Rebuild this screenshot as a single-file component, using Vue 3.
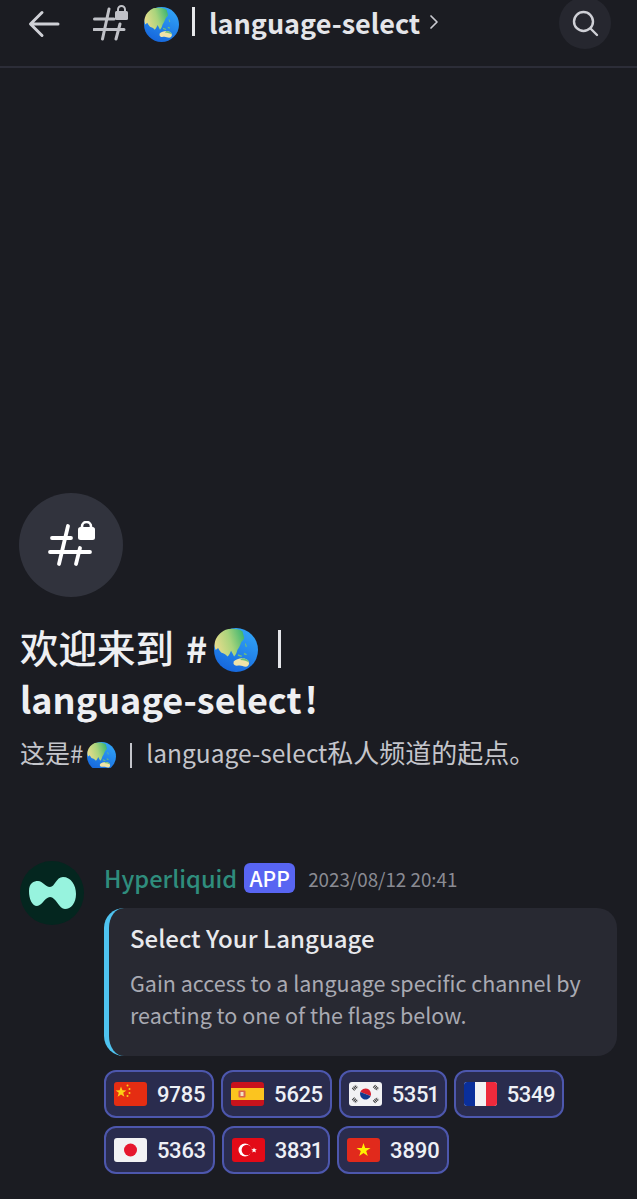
<script setup>
const reactions = [
  { flag: "cn", count: 9785 },
  { flag: "es", count: 5625 },
  { flag: "kr", count: 5351 },
  { flag: "fr", count: 5349 },
  { flag: "jp", count: 5363 },
  { flag: "tr", count: 3831 },
  { flag: "vn", count: 3890 },
];
</script>

<template>
  <div class="page">
    <svg width="0" height="0" class="defs" aria-hidden="true">
      <defs>
        <linearGradient id="sea" x1="0.7" y1="0.1" x2="0.3" y2="1">
          <stop offset="0" stop-color="#2f9ff5" />
          <stop offset="1" stop-color="#1565dc" />
        </linearGradient>
        <linearGradient id="land" x1="0" y1="0.5" x2="1" y2="0.2">
          <stop offset="0" stop-color="#e6dc8c" />
          <stop offset="0.5" stop-color="#a9d47c" />
          <stop offset="1" stop-color="#3cb570" />
        </linearGradient>
        <symbol id="globe" viewBox="0 0 32 32">
          <circle cx="16" cy="16" r="16" fill="url(#sea)" />
          <path
            d="M8.500 1.200C12 .2 17 .3 20.700 2.400L22 7.300C21.500 9 20 9.500 19.500 11 18.800 13 18 14.500 17 16 16.500 18 15.800 19.500 14.600 20.700 13.800 19 13 17.500 12.400 16.500 11.800 18 11 19.800 9.800 20.700 8.500 19 7 18.500 5.500 18 4.500 17 3.500 15.500 3 14.500L1.200 16C.4 14 .2 12 .7 10 1.800 6 4.500 3 8.500 1.200Z"
            fill="url(#land)"
          />
          <path d="M14 24.500c1.800-1.500 4-2.500 6.500-2.500 2.400 0 4.700 1.200 5 3.200.2 1.600-1 2.900-2.500 2.900-1.700 0-2.800-.8-4.300-.8-1.400 0-2.800.5-3.800-.4-.8-.7-1-1.600-.4-2.400Z" fill="#efe3a8" />
          <path d="M20.500 22c2.400 0 4.700 1.200 5 3.200-1.700-1.200-3.500-1.700-6.500-1.900Z" fill="#6fc07a" />
          <path d="M17.500 19l3 1.200-.6.900-2.600-1ZM22 18l2 1-.7.800-1.700-.8ZM23 11l1 2.500-.9.400-.6-2.400Z" fill="#6fc07a" />
        </symbol>
      </defs>
    </svg>

    <header class="topbar">
      <svg class="back" width="34" height="30" viewBox="0 0 34 30" fill="none" stroke="#cfd0d6" stroke-width="3" stroke-linecap="round" stroke-linejoin="round">
        <path d="M31 15H4M15 3.500 3.500 15 15 26.500" />
      </svg>
      <svg class="hash" width="36" height="38" viewBox="0 0 36 38" fill="none">
        <path d="M16 5 9.500 35M27 20l-4 15M1.500 15H21M1 25.500h30" stroke="#c0c1c7" stroke-width="3" stroke-linecap="round" />
        <rect x="22" y="7" width="13" height="9" rx="1.500" fill="#c0c1c7" />
        <path d="M25 7.500V5.500a3.500 3.500 0 0 1 7 0v2" stroke="#c0c1c7" stroke-width="2" />
      </svg>
      <svg class="globe-top" width="35" height="35"><use href="#globe" /></svg>
      <span class="bar"></span>
      <span class="channel">language-select</span>
      <svg class="chev" width="10" height="16" viewBox="0 0 10 16" fill="none" stroke="#c9cad0" stroke-width="1.700" stroke-linecap="round" stroke-linejoin="round">
        <path d="M2 2l6 6-6 6" />
      </svg>
      <div class="search">
        <svg width="28" height="28" viewBox="0 0 28 28" fill="none" stroke="#cfd0d6" stroke-width="2.400" stroke-linecap="round">
          <circle cx="12.500" cy="12.500" r="9.500" />
          <path d="M20 20l6 6" />
        </svg>
      </div>
    </header>

    <section class="welcome">
      <div class="channel-icon">
        <svg width="52" height="48" viewBox="0 0 52 48" fill="none">
          <path d="M23 5 14 43M35 27l-4 16M7 17h19M5 31h40" stroke="#fff" stroke-width="3.800" stroke-linecap="round" />
          <rect x="33" y="6" width="17" height="13" rx="2.500" fill="#fff" />
          <path d="M37 7V5.500a4.500 4.500 0 0 1 9 0V7" stroke="#fff" stroke-width="2.600" />
        </svg>
      </div>
      <h1 class="title">
        <span class="cjk">欢迎来到</span><span class="hash-title">#</span><svg class="globe-title" width="44" height="44"><use href="#globe" /></svg><span class="title-bar"></span><br />language-select<span class="bang">!</span>
      </h1>
      <p class="subtitle">
        这是<span class="hash-sub">#</span><svg class="globe-sub" width="29" height="26" viewBox="0 0 29 26"><use href="#globe" width="29" height="29" /></svg><span class="sub-bar"></span><span class="sub-latin">language-select</span><span class="sub-tail">私人频道的起点。</span>
      </p>
    </section>

    <section class="message">
      <div class="avatar">
        <svg width="47" height="32" viewBox="0 0 47 32">
          <path
            d="M0 14C0 6 5 4 9 4c5 0 7 6 12 6s6-10 13-10c8 0 13 8 13 17 0 9-5 15-11 15-6 0-9-12-15-12-5 0-8 9-13 9-5 0-8-7-8-15Z"
            fill="#97f3de"
          />
        </svg>
      </div>
      <div class="body">
        <div class="meta">
          <span class="name">Hyperliquid</span>
          <span class="badge">APP</span>
          <span class="time">2023/08/12 20:41</span>
        </div>
        <div class="embed">
          <h2 class="embed-title">Select Your Language</h2>
          <p class="embed-text">Gain access to a language specific channel by reacting to one of the flags below.</p>
        </div>
        <div class="reactions">
          <div v-for="r in reactions" :key="r.flag" class="reaction">
            <svg class="flag" width="33" height="24" viewBox="0 0 33 24">
              <template v-if="r.flag === 'cn'">
                <rect width="33" height="24" fill="#e52d12" />
                <path d="M7 4.500l1.400 3.800 4 .1-3.200 2.400 1.200 3.900L7 12.400l-3.400 2.300 1.200-3.900-3.200-2.400 4-.1Z" fill="#fcd116" />
                <circle cx="13.500" cy="3.500" r="1" fill="#fcd116" />
                <circle cx="15.500" cy="7" r="1" fill="#fcd116" />
                <circle cx="15.500" cy="11" r="1" fill="#fcd116" />
                <circle cx="13.500" cy="14" r="1" fill="#fcd116" />
              </template>
              <template v-else-if="r.flag === 'es'">
                <rect width="33" height="24" fill="#c8131c" />
                <rect y="6" width="33" height="12" fill="#fbc41f" />
                <rect x="7.500" y="8.500" width="7" height="7" rx="1" fill="#d9634e" />
                <rect x="9.500" y="10" width="3" height="4" fill="#f3e1c0" />
              </template>
              <template v-else-if="r.flag === 'kr'">
                <rect width="33" height="24" fill="#f2f2f4" />
                <path d="M11 12a5.500 5.500 0 0 1 11 0Z" fill="#d6202f" transform="rotate(20 16.500 12)" />
                <path d="M11 12a5.500 5.500 0 0 0 11 0Z" fill="#123a8e" transform="rotate(20 16.500 12)" />
                <g stroke="#333" stroke-width="3.600" stroke-dasharray="1 .7">
                  <path d="M4 7.500l4-3.500M25 4l4 3.500M4 16.500l4 3.500M25 20l4-3.500" />
                </g>
              </template>
              <template v-else-if="r.flag === 'fr'">
                <rect width="33" height="24" fill="#f2f2f4" />
                <rect width="11" height="24" fill="#0a2f9c" />
                <rect x="22" width="11" height="24" fill="#ee2a3c" />
              </template>
              <template v-else-if="r.flag === 'jp'">
                <rect width="33" height="24" fill="#f2f2f4" />
                <circle cx="16.500" cy="12" r="6.500" fill="#e6162d" />
              </template>
              <template v-else-if="r.flag === 'tr'">
                <rect width="33" height="24" fill="#e30a17" />
                <circle cx="13" cy="12" r="6.500" fill="#fff" />
                <circle cx="14.800" cy="12" r="5.200" fill="#e30a17" />
                <path d="M22 9.500l.8 1.800 2-.1-1.500 1.300.6 1.900-1.900-1-1.700 1 .5-1.900-1.500-1.300 2 .1Z" fill="#fff" />
              </template>
              <template v-else>
                <rect width="33" height="24" fill="#e12a1c" />
                <path d="M16.500 5l1.700 5h5.300l-4.300 3.100 1.600 5-4.300-3.100-4.300 3.100 1.600-5L9.500 10h5.300Z" fill="#fff000" />
              </template>
            </svg>
            <span class="count">{{ r.count }}</span>
          </div>
        </div>
      </div>
    </section>
  </div>
</template>

<style>
html,
body {
  background: #1b1c22;
}
</style>

<style scoped>
.page {
  width: 637px;
  height: 1199px;
  overflow: hidden;
  background: #1b1c22;
  color: #f0f1f4;
  font-family: "Noto Sans CJK SC", "Noto Sans", sans-serif;
}

.defs {
  position: absolute;
}

.topbar {
  height: 68px;
  box-sizing: border-box;
  border-bottom: 2px solid #2c2d38;
  display: flex;
  align-items: flex-start;
  padding-left: 27px;
}

.back {
  margin-top: 9px;
}

.hash {
  margin: 4px 0 0 32px;
}

.globe-top {
  margin: 7px 0 0 15px;
}

.bar {
  width: 3px;
  height: 29px;
  margin: 7px 0 0 13px;
  background: #e6e7ea;
}

.channel {
  margin: 2px 0 0 14px;
  font-size: 27px;
  line-height: 42px;
  font-weight: 700;
  color: #e4e5e9;
}

.chev {
  margin: 14px 0 0 9px;
}

.search {
  width: 52px;
  height: 52px;
  margin: -3px 0 0 auto;
  margin-right: 26px;
  border-radius: 50%;
  background: #26272f;
  display: flex;
  align-items: center;
  justify-content: center;
}

.welcome {
  padding: 425px 20px 0 19px;
}

.channel-icon {
  width: 104px;
  height: 104px;
  border-radius: 50%;
  background: #31333d;
  display: flex;
  align-items: center;
  justify-content: center;
}

.title {
  margin: 24px 0 0 1px;
  font-size: 36px;
  line-height: 51px;
  font-weight: 700;
  color: #eeeff2;
}

.cjk {
  font-size: 38.500px;
  font-weight: 500;
}

.hash-title {
  margin-left: 12px;
}

.bang {
  margin-left: 3px;
}

.globe-title {
  vertical-align: -9px;
  margin-left: 7px;
}

.title-bar {
  display: inline-block;
  width: 3px;
  height: 38px;
  margin-left: 20px;
  vertical-align: -5px;
  background: #e4e5e9;
}

.subtitle {
  margin: 10px 0 0 1px;
  font-size: 25px;
  line-height: 36px;
  color: #c4c5cb;
  white-space: nowrap;
}

.hash-sub {
  margin-right: 4px;
  font-size: 24px;
}

.sub-latin {
  font-size: 24.500px;
}

.sub-tail {
  font-size: 26px;
}

.globe-sub {
  vertical-align: -5px;
}

.sub-bar {
  display: inline-block;
  width: 2px;
  height: 25px;
  margin: 0 14px 0 14px;
  vertical-align: -5px;
  background: #c4c5cb;
}

.message {
  display: flex;
  gap: 20px;
  margin-top: 90px;
  padding: 0 20px;
}

.avatar {
  flex: none;
  width: 64px;
  height: 64px;
  border-radius: 50%;
  background: #04261f;
  display: flex;
  align-items: center;
  justify-content: center;
}

.body {
  flex: 1;
  min-width: 0;
}

.meta {
  display: flex;
  align-items: center;
  height: 34px;
}

.name {
  font-size: 23.600px;
  font-weight: 500;
  color: #2f8d7d;
}

.badge {
  margin-left: 7px;
  width: 51px;
  height: 30px;
  border-radius: 6px;
  background: #5865f2;
  color: #fff;
  font-size: 21px;
  font-weight: 500;
  display: flex;
  align-items: center;
  justify-content: center;
}

.time {
  margin-left: 13px;
  font-size: 18.800px;
  color: #8a8b93;
}

.embed {
  margin-top: 13px;
  height: 148px;
  box-sizing: border-box;
  padding: 12px 20px 0 21px;
  border-left: 5px solid #4fc3f0;
  border-radius: 20px;
  background: #282932;
}

.embed-title {
  margin: 0;
  font-size: 24px;
  line-height: 36px;
  font-weight: 500;
  color: #e8e9ed;
}

.embed-text {
  margin: 11px 0 0;
  font-size: 21.500px;
  line-height: 32px;
  color: #a9aab2;
}

.reactions {
  display: flex;
  flex-wrap: wrap;
  gap: 8px 7px;
  margin-top: 14px;
}

.reaction {
  height: 48px;
  box-sizing: border-box;
  padding: 0 7px 0 8px;
  display: flex;
  align-items: center;
  gap: 10px;
  border: 2px solid #4d57ad;
  border-radius: 12px;
  background: #2a2c4e;
}

.flag {
  border-radius: 3px;
}

.count {
  font-family: Roboto, sans-serif;
  font-size: 22px;
  font-weight: 500;
  letter-spacing: -0.4px;
  font-variant-numeric: proportional-nums;
  color: #eef0f6;
}
</style>
